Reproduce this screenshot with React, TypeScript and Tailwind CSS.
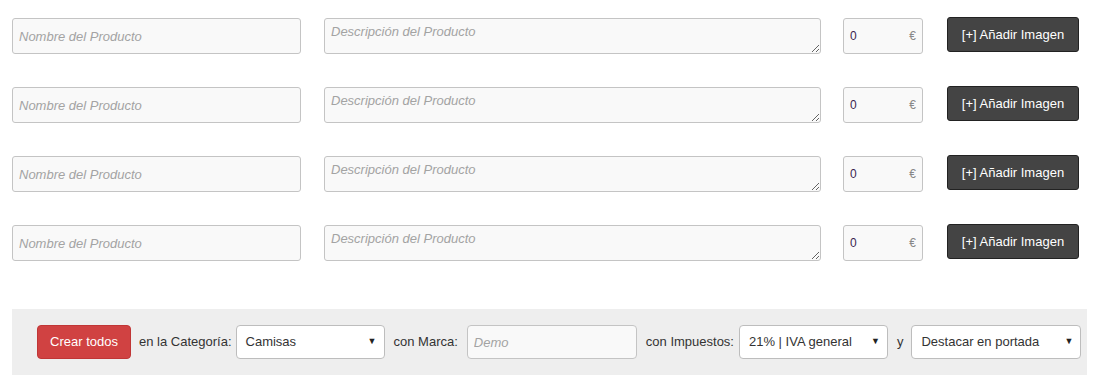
import React from 'react';

const rows = [0, 1, 2, 3];

const SelectBox: React.FC<{ value: string; width: string }> = ({ value, width }) => (
  <div
    className={`${width} h-[34px] flex items-center justify-between bg-white border border-[#bdbdbd] rounded-[4px] pl-[9px] pr-[7px] text-[13px] text-[#333]`}
  >
    <span>{value}</span>
    <span className="text-[9px] text-[#222]">▼</span>
  </div>
);

export default function App() {
  return (
    <div className="w-[1100px] h-[375px] overflow-hidden bg-white px-3 pt-[18px] text-[13px] text-[#333] font-['Liberation_Sans',Arial,sans-serif]">
      <div className="flex flex-col gap-[33px]">
        {rows.map((r) => (
          <div key={r} className="flex items-start">
            <input
              readOnly
              placeholder="Nombre del Producto"
              className="w-[289px] h-[36px] px-[6px] bg-[#f9f9f9] border border-[#c4c4c4] rounded-[3px] text-[13px] placeholder:italic placeholder:text-[#a3a3a3] outline-none"
            />
            <textarea
              readOnly
              placeholder="Descripción del Producto"
              className="ml-[23px] w-[497px] h-[36px] px-[6px] pt-[5px] bg-[#f9f9f9] border border-[#c4c4c4] rounded-[3px] text-[13px] leading-[16px] placeholder:italic placeholder:text-[#a3a3a3] outline-none resize"
            />
            <div className="ml-[22px] w-[80px] h-[36px] flex items-center justify-between pl-[6px] pr-[6px] bg-[#f9f9f9] border border-[#c4c4c4] rounded-[3px]">
              <span className="text-[12px] text-[#3b1f4f]">0</span>
              <span className="text-[12px] text-[#888]">€</span>
            </div>
            <button className="ml-[24px] mt-[-1px] w-[132px] h-[35px] bg-[#444] border border-[#222] rounded-[3px] text-white text-[13px]">
              [+] Añadir Imagen
            </button>
          </div>
        ))}
      </div>
      <div className="mt-[48px] w-[1075px] h-[80px] bg-[#eeeeee] pl-[25px] pt-[16px] flex items-start gap-[8px]">
        <button className="w-[94px] h-[34px] bg-[#d04242] border border-[#c03636] rounded-[4px] text-white text-[13px]">
          Crear todos
        </button>
        <div className="h-[34px] flex items-center gap-[4px]">
          <span>en la Categoría:</span>
          <SelectBox value="Camisas" width="w-[149px]" />
        </div>
        <div className="ml-[1px] h-[34px] flex items-center gap-[9px]">
          <span>con Marca:</span>
          <input
            readOnly
            placeholder="Demo"
            className="w-[170px] h-[34px] px-[6px] bg-[#f9f9f9] border border-[#c4c4c4] rounded-[4px] text-[13px] placeholder:italic placeholder:text-[#a3a3a3] outline-none"
          />
        </div>
        <div className="ml-[1px] h-[34px] flex items-center gap-[5px]">
          <span>con Impuestos:</span>
          <SelectBox value="21% | IVA general" width="w-[149px]" />
        </div>
        <div className="ml-[1px] h-[34px] flex items-center gap-[8px]">
          <span>y</span>
          <SelectBox value="Destacar en portada" width="w-[170px]" />
        </div>
      </div>
    </div>
  );
}
